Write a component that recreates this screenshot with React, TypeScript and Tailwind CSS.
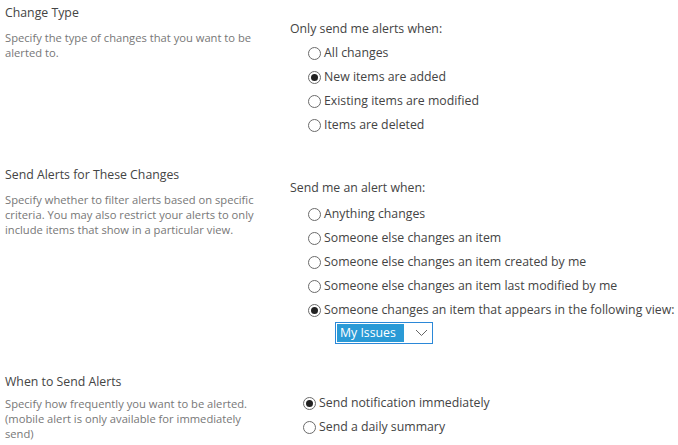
import React from 'react';

const font = { fontFamily: '"Open Sans", "Noto Sans", sans-serif' };

function Radio({ label, checked }: { label: string; checked?: boolean }) {
  return (
    <div className="flex items-center h-[24px]">
      <span className="w-[13px] h-[13px] rounded-full border border-[#6b6b6b] bg-white flex items-center justify-center mr-[3px]">
        {checked && <span className="w-[7px] h-[7px] rounded-full bg-[#222]" />}
      </span>
      <span className="text-[12.3px] text-[#444] whitespace-nowrap">{label}</span>
    </div>
  );
}

function Heading({ title, lines, tight }: { title: string; lines: string[]; tight?: boolean }) {
  return (
    <div className="w-[290px] shrink-0 pl-[5px]">
      <div className="text-[12.3px] leading-[18px] text-[#444]">{title}</div>
      <div className={`${tight ? 'mt-[5px]' : 'mt-[8px]'} text-[11.2px] leading-[15px] text-[#777]`}>
        {lines.map((l) => (
          <div key={l} className="whitespace-nowrap">{l}</div>
        ))}
      </div>
    </div>
  );
}

export default function App() {
  return (
    <div className="w-[678px] h-[445px] bg-white overflow-hidden" style={font}>
      {/* Change Type */}
      <div className="flex pt-[4px]">
        <Heading
          title="Change Type"
          lines={['Specify the type of changes that you want to be', 'alerted to.']}
        />
        <div className="pt-[16px]">
          <div className="text-[12.3px] leading-[18px] text-[#444]">Only send me alerts when:</div>
          <div className="mt-[3px] pl-[18px]">
            <Radio label="All changes" />
            <Radio label="New items are added" checked />
            <Radio label="Existing items are modified" />
            <Radio label="Items are deleted" />
          </div>
        </div>
      </div>

      {/* Send Alerts for These Changes */}
      <div className="flex mt-[29px]">
        <Heading
          title="Send Alerts for These Changes"
          lines={[
            'Specify whether to filter alerts based on specific',
            'criteria. You may also restrict your alerts to only',
            'include items that show in a particular view.',
          ]}
        />
        <div className="pt-[13px]">
          <div className="text-[12.3px] leading-[18px] text-[#444]">Send me an alert when:</div>
          <div className="mt-[5px] pl-[18px]">
            <Radio label="Anything changes" />
            <Radio label="Someone else changes an item" />
            <Radio label="Someone else changes an item created by me" />
            <Radio label="Someone else changes an item last modified by me" />
            <Radio label="Someone changes an item that appears in the following view:" checked />
            <div className="ml-[27px] w-[98px] h-[22px] border border-[#2b88d8] flex items-center p-[1px]">
              <span className="h-full w-[67px] bg-[#2a9ad6] text-white text-[12.3px] leading-[18px] pl-[3px]">
                My Issues
              </span>
              <svg className="ml-auto mr-[3px]" width="13" height="8" viewBox="0 0 13 8">
                <path d="M1 1l5.5 5.5L12 1" fill="none" stroke="#666" strokeWidth="1" />
              </svg>
            </div>
          </div>
        </div>
      </div>

      {/* When to Send Alerts */}
      <div className="flex mt-[29px]">
        <Heading
          title="When to Send Alerts"
          tight
          lines={[
            'Specify how frequently you want to be alerted.',
            '(mobile alert is only available for immediately',
            'send)',
          ]}
        />
        <div className="pt-[18px] pl-[13px]">
          <Radio label="Send notification immediately" checked />
          <Radio label="Send a daily summary" />
          <Radio label="Send a weekly summary" />
        </div>
      </div>
    </div>
  );
}
